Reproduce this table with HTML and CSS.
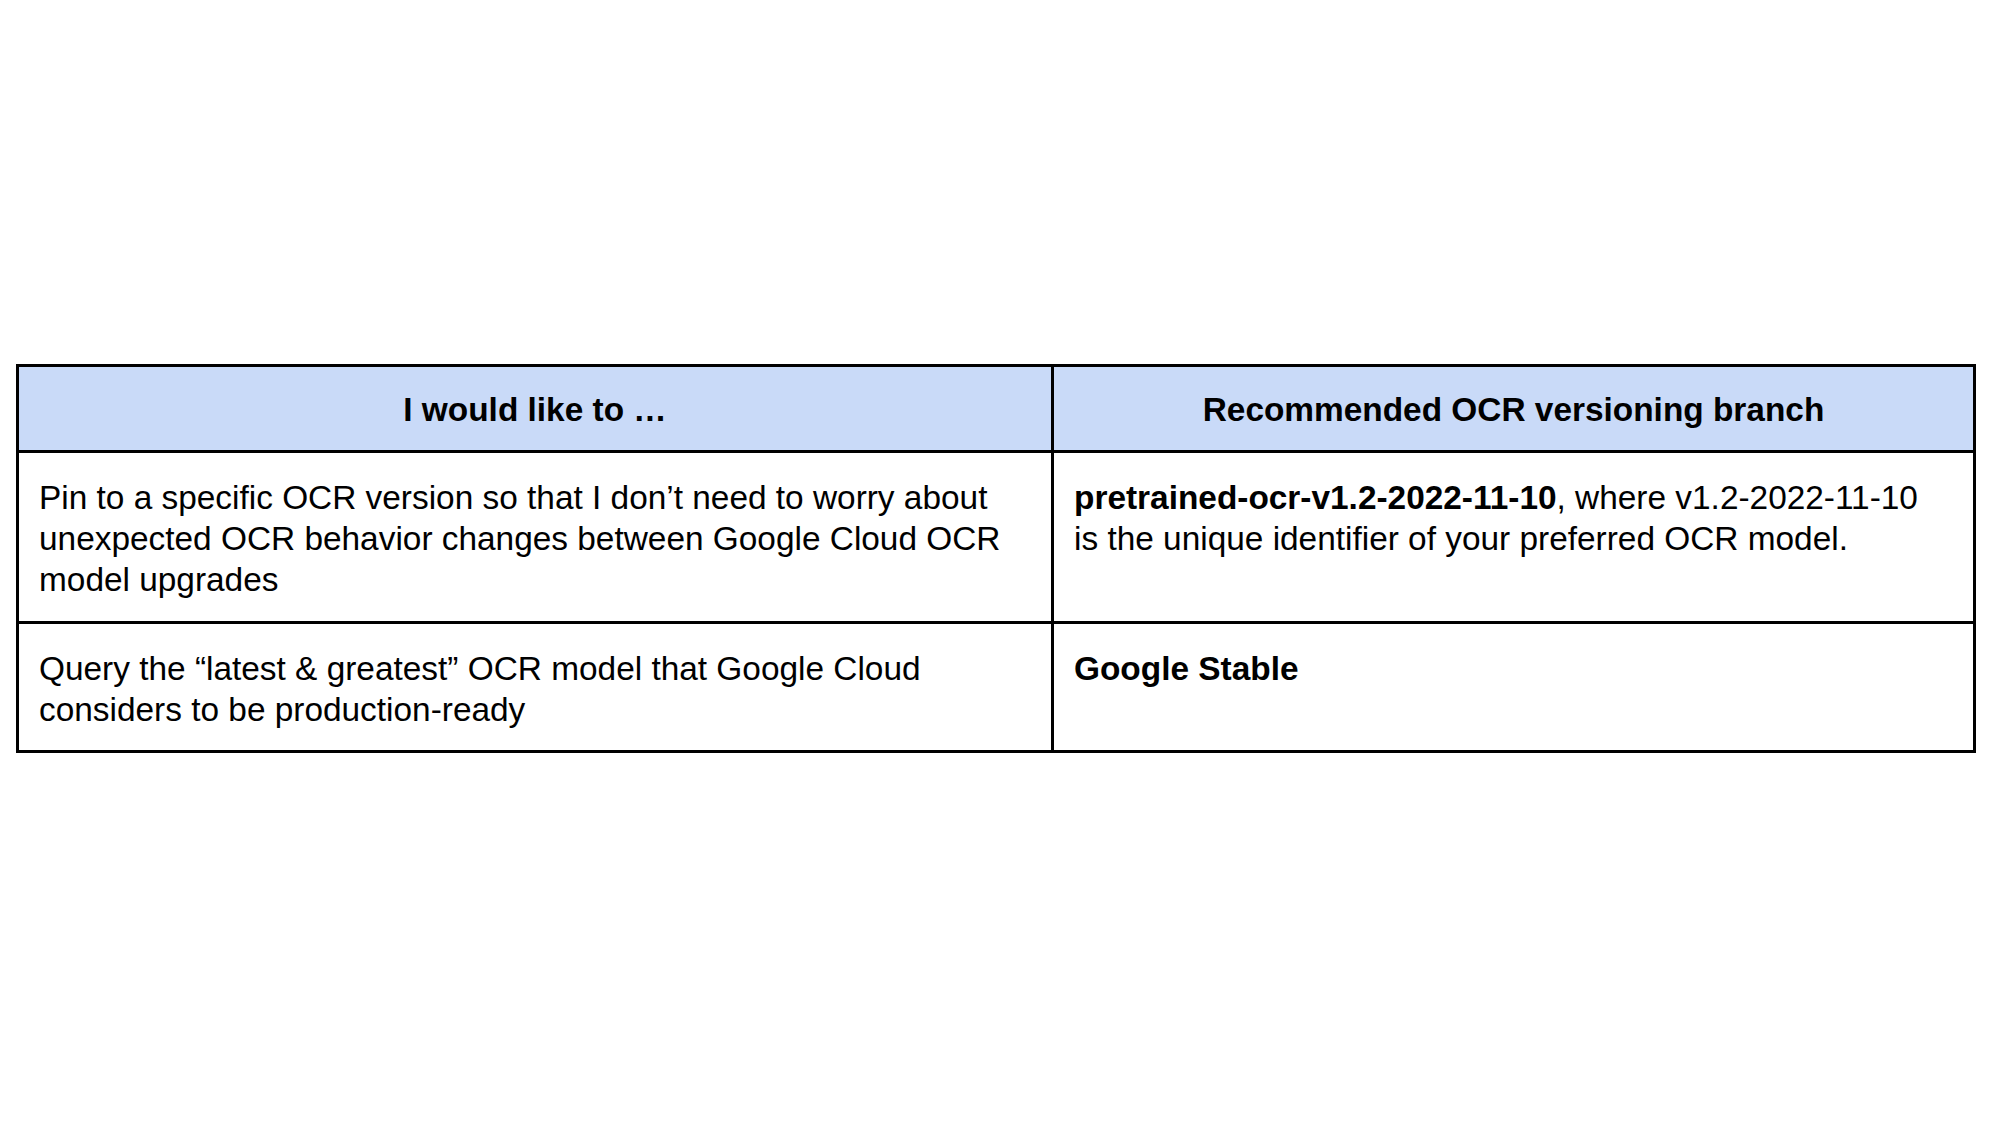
FILE: index.html
```html
<!DOCTYPE html>
<html lang="en">
<head>
<meta charset="utf-8">
<title>OCR versioning</title>
<link rel="stylesheet" href="styles.css">
</head>
<body>
<main class="page">
  <table class="grid">
    <colgroup>
      <col class="col-want">
      <col class="col-branch">
    </colgroup>
    <thead>
      <tr class="head-row">
        <th class="head-cell">I would like to …</th>
        <th class="head-cell">Recommended OCR versioning branch</th>
      </tr>
    </thead>
    <tbody>
      <tr>
        <td class="cell">Pin to a specific OCR version so that I don’t need to worry about unexpected OCR behavior changes between Google Cloud OCR model upgrades</td>
        <td class="cell"><strong class="strong">pretrained-ocr-v1.2-2022-11-10</strong>, where v1.2-2022-11-10<br>is the unique identifier of your preferred OCR model.</td>
      </tr>
      <tr class="last-row">
        <td class="cell">Query the “latest &amp; greatest” OCR model that Google Cloud considers to be production-ready</td>
        <td class="cell"><strong class="strong">Google Stable</strong></td>
      </tr>
    </tbody>
  </table>
</main>
</body>
</html>
```

FILE: styles.css
```css
html, body {
  margin: 0;
  padding: 0;
  background: #ffffff;
}

.page {
  width: 2000px;
  height: 1125px;
  box-sizing: border-box;
  padding: 364px 0 0 16px;
  font-family: "Liberation Sans", Arial, sans-serif;
  color: #000000;
}

.grid {
  border-collapse: collapse;
  table-layout: fixed;
  width: 1957px;
}

.col-want {
  width: 1035px;
}

.col-branch {
  width: 922px;
}

.head-row {
  background: #c9daf8;
}

.head-cell,
.cell {
  border: 3px solid #000000;
  font-size: 33.4px;
  line-height: 41px;
  vertical-align: top;
}

.head-cell {
  font-weight: 700;
  text-align: center;
  vertical-align: middle;
  padding: 22px 21px 20px;
}

.cell {
  font-weight: 400;
  text-align: left;
  padding: 24px 21px 21px 20px;
}

.last-row .cell {
  padding-bottom: 20px;
}

.strong {
  font-weight: 700;
}
```
